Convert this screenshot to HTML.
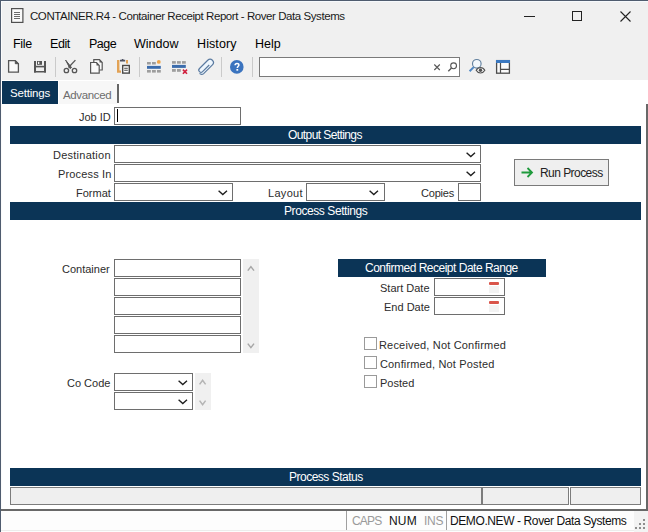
<!DOCTYPE html>
<html><head><meta charset="utf-8">
<style>
*{margin:0;padding:0;box-sizing:border-box}
html,body{width:648px;height:532px;overflow:hidden;background:#f0f0f0;font-family:"Liberation Sans",sans-serif;color:#000}
.a{position:absolute}
svg.a{overflow:visible}
.t{position:absolute;white-space:nowrap;line-height:1}
.menu{font-size:12.5px;color:#000;top:37.5px}
.hdr{position:absolute;left:10px;width:631px;height:18px;background:#0b3456}
.ht{position:absolute;white-space:nowrap;line-height:1;font-size:12px;color:#fff}
.inp{position:absolute;background:#fff;border:1px solid #6e6e6e}
.lbl{position:absolute;font-size:11px;color:#2c2c2c;white-space:nowrap;line-height:1}
.sb{position:absolute;background:#f0f0f0}
.cb{position:absolute;width:13px;height:13px;border:1px solid #9a9a9a;background:#fff}
.psep{position:absolute;width:1px;background:#c9c9c9}
</style></head><body>
<!-- window borders -->
<div class="a" style="left:0;top:0;width:648px;height:1px;background:#4f5c6f"></div>
<div class="a" style="left:0;top:0;width:1px;height:532px;background:#4f5c6f"></div>
<div class="a" style="left:1px;top:1px;width:647px;height:1px;background:#f6f9fc"></div>
<div class="a" style="left:1px;top:1px;width:1px;height:531px;background:#fbfbfb"></div>
<div class="a" style="left:1px;top:80px;width:647px;height:24px;background:#fff"></div>
<div class="a" style="left:1px;top:511px;width:647px;height:21px;background:#fdfdfd"></div>
<div class="a" style="left:1px;top:530px;width:647px;height:1px;background:#ececec"></div>
<div class="a" style="left:634px;top:511px;width:14px;height:21px;background:#f3f3f3"></div>
<!-- title bar -->
<svg class="a" style="left:11px;top:8px" width="13" height="15" viewBox="0 0 13 15"><rect x="0.6" y="0.6" width="11.3" height="13.8" fill="#fafafa" stroke="#505050" stroke-width="1.2"/><g fill="#6a6a6a"><rect x="3" y="4" width="6" height="1"/><rect x="3" y="6" width="6" height="1"/><rect x="3" y="8" width="6" height="1"/><rect x="3" y="10" width="6" height="1"/></g></svg>
<div class="t" id="title" style="left:30px;top:11px;font-size:11.5px;color:#1a1a1a;letter-spacing:-0.43px">CONTAINER.R4 - Container Receipt Report - Rover Data Systems</div>
<div class="a" style="left:524px;top:16px;width:11px;height:1px;background:#222"></div>
<div class="a" style="left:572px;top:11px;width:10px;height:10px;border:1px solid #222"></div>
<svg class="a" style="left:620px;top:11px" width="11" height="11" viewBox="0 0 11 11"><path d="M0.5 0.5L10.5 10.5M10.5 0.5L0.5 10.5" stroke="#222" stroke-width="1.1"/></svg>

<!-- menu -->
<div class="t menu" style="left:13px;letter-spacing:-0.3px">File</div>
<div class="t menu" style="left:50px;letter-spacing:-0.45px">Edit</div>
<div class="t menu" style="left:89px;letter-spacing:-0.5px">Page</div>
<div class="t menu" style="left:134px">Window</div>
<div class="t menu" style="left:197px;letter-spacing:0.1px">History</div>
<div class="t menu" style="left:255px">Help</div>

<!-- toolbar -->
<svg class="a" style="left:0;top:54px" width="520" height="26" viewBox="0 54 520 26">
<!-- new -->
<path d="M8.6 60.6H15.3L18.4 63.7V72.1H8.6Z" fill="#fafafa" stroke="#555" stroke-width="1.3"/>
<path d="M15.3 60.6V63.7H18.4Z" fill="#555" stroke="#555" stroke-width="1"/>
<!-- save -->
<g fill="#555"><rect x="34" y="61" width="2" height="11.5"/><rect x="44" y="61" width="2" height="11.5"/><rect x="34" y="65.8" width="12" height="1.6"/><rect x="34" y="71" width="12" height="1.5"/><rect x="37" y="61" width="5" height="3.8"/></g>
<rect x="38" y="61.8" width="1.3" height="2.2" fill="#f4f4f4"/>
<!-- scissors -->
<path d="M65.6 60.1L71.5 67.5L70 68.5Z" fill="#555" stroke="#555" stroke-width="1"/>
<path d="M75.4 60.1L68.5 67.5" stroke="#555" stroke-width="1.3"/>
<circle cx="66.4" cy="70.5" r="2.2" fill="none" stroke="#555" stroke-width="1.3"/>
<circle cx="74.5" cy="70.5" r="2.2" fill="none" stroke="#555" stroke-width="1.3"/>
<!-- copy -->
<path d="M93.8 59.7H99.5L102.2 62.6V70H93.8Z" fill="#fafafa" stroke="#555" stroke-width="1.2"/>
<path d="M99.5 59.7V62.6H102.2Z" fill="#555"/>
<path d="M90.6 62.5H96.5L99.2 65.4V73.2H90.6Z" fill="#fafafa" stroke="#555" stroke-width="1.2"/>
<path d="M96.5 62.5V65.4H99.2Z" fill="#555"/>
<!-- paste -->
<path d="M118.2 60V71.6H121" fill="none" stroke="#e2a255" stroke-width="2.4"/>
<path d="M127 60V63.5" fill="none" stroke="#e2a255" stroke-width="2"/>
<path d="M120 61.5H125.2V59.8H123.4V59H121.8V59.8H120Z" fill="#4f5363"/>
<rect x="122.7" y="65.5" width="6.6" height="7.6" fill="#fff" stroke="#4a4a4a" stroke-width="1.4"/>
<path d="M124.2 68.3H127.8M124.2 70.3H127.8" stroke="#4a4a4a" stroke-width="1.1"/>
<!-- insert row -->
<g fill="#9d9d9d"><rect x="147" y="62" width="3.8" height="2.5"/><rect x="152" y="62" width="3.8" height="2.5"/><rect x="147" y="70" width="3.8" height="2.6"/><rect x="152" y="70" width="3.8" height="2.6"/><rect x="157" y="70" width="3.8" height="2.6"/></g>
<circle cx="158.8" cy="61.9" r="1.9" fill="#efa54a"/>
<rect x="147" y="65.9" width="13.8" height="2.9" fill="#3b6cac"/>
<!-- delete row -->
<g fill="#9d9d9d"><rect x="172" y="61.1" width="3.8" height="2.6"/><rect x="177" y="61.1" width="3.8" height="2.6"/><rect x="182" y="61.1" width="3.8" height="2.6"/><rect x="172" y="69" width="3.8" height="2.8"/><rect x="177" y="69" width="3.8" height="2.8"/></g>
<rect x="172" y="64.9" width="13.8" height="3" fill="#3b6cac"/>
<path d="M182.9 69.6L187 73.8M187 69.6L182.9 73.8" stroke="#d0203e" stroke-width="1.6"/>
<!-- paperclip -->
<g transform="translate(0.2 0.8) rotate(-45 206.2 66.7)"><path d="M210 66.9H200.6A2.2 2.2 0 0 1 200.6 62.5H212.3A3.3 3.3 0 0 1 212.3 69.1H199.9A2.9 2.9 0 0 1 197.2 66" fill="#eef6fd" stroke="#5a7aa0" stroke-width="1.2"/></g>
<!-- help -->
<circle cx="236.8" cy="66.9" r="6.8" fill="#3b74bf"/>
<path d="M235.1 65.3C235.1 64.1 235.9 63.4 237 63.4C238.1 63.4 238.9 64.1 238.9 65C238.9 66.3 237.3 66.4 237.3 68.1" fill="none" stroke="#fff" stroke-width="1.5"/>
<rect x="236.4" y="69" width="1.8" height="1.7" fill="#fff"/>
<!-- separators -->
<g fill="#cacaca"><rect x="55" y="57" width="1" height="20"/><rect x="139" y="57" width="1" height="20"/><rect x="221" y="57" width="1" height="20"/><rect x="252" y="57" width="1" height="20"/></g>
<!-- search box -->
<rect x="259.5" y="57.5" width="200" height="19" fill="#fff" stroke="#7a7a7a"/>
<path d="M434.3 64.5L439.8 70M439.8 64.5L434.3 70" stroke="#555" stroke-width="1.1"/>
<circle cx="453.6" cy="65.8" r="2.9" fill="none" stroke="#555" stroke-width="1.1"/>
<path d="M451.5 68L448.3 71.2" stroke="#555" stroke-width="1.3"/>
<!-- find eye -->
<circle cx="476.8" cy="63.8" r="4.3" fill="#f2f8fd" stroke="#62809e" stroke-width="1.15"/>
<path d="M473.7 67.1L469.6 71.2" stroke="#4f88c6" stroke-width="2"/>
<path d="M476.2 70.3C478.2 66.7 482.8 66.7 484.8 70.3C482.8 73.9 478.2 73.9 476.2 70.3Z" fill="#fff" stroke="#505050" stroke-width="1.2"/>
<circle cx="480.5" cy="70.3" r="1.7" fill="#505050"/>
<!-- layout -->
<rect x="496.6" y="60.6" width="12.8" height="12.6" fill="#fafafa" stroke="#4c4c4c" stroke-width="1.3"/>
<rect x="496" y="60" width="14" height="3" fill="#3b78c0"/>
<path d="M500.5 63V73M501 69.4H509.4" stroke="#4c4c4c" stroke-width="1.2"/>
</svg>

<!-- tabs -->
<div class="a" style="left:2px;top:81px;width:56px;height:24px;background:#0b3456"></div>
<div class="a" style="left:59px;top:81px;width:58px;height:23px;background:#f7f7f7"></div>
<div class="t" id="tset" style="left:10px;top:88px;font-size:11.5px;color:#fff;letter-spacing:-0.2px">Settings</div>
<div class="t" id="tadv" style="left:63px;top:90px;font-size:11.5px;color:#6d6d6d;letter-spacing:-0.35px">Advanced</div>
<div class="a" style="left:117px;top:84px;width:2px;height:19px;background:#666"></div>

<!-- form area -->
<div class="a" style="left:2px;top:104px;width:644px;height:405px;background:#fff"></div>
<div class="a" style="left:646px;top:104px;width:2px;height:407px;background:#686868"></div>
<div class="a" style="left:1px;top:509px;width:647px;height:2px;background:#686868"></div>

<div class="lbl" id="ljob" style="left:79px;top:112px">Job ID</div>
<div class="inp" style="left:114px;top:107px;width:127px;height:18px"></div>
<div class="a" style="left:117px;top:109px;width:1px;height:13px;background:#000"></div>

<div class="hdr" style="top:126px"></div>
<div class="ht" id="hout" style="left:288px;top:129px;font-size:12px;letter-spacing:-0.59px">Output Settings</div>

<div class="lbl" id="ldest" style="left:53px;top:150px;letter-spacing:0.25px">Destination</div>
<div class="inp" style="left:114px;top:145px;width:367px;height:18px"></div>
<div class="lbl" id="lproc" style="left:58px;top:169px;letter-spacing:0.15px">Process In</div>
<div class="inp" style="left:114px;top:164px;width:367px;height:18px"></div>
<div class="lbl" id="lfmt" style="left:76px;top:188px">Format</div>
<div class="inp" style="left:114px;top:183px;width:119px;height:18px"></div>
<div class="lbl" id="llay" style="left:268px;top:188px;letter-spacing:0.3px">Layout</div>
<div class="inp" style="left:306px;top:183px;width:79px;height:18px"></div>
<div class="lbl" id="lcop" style="left:421px;top:188px;letter-spacing:-0.2px">Copies</div>
<div class="inp" style="left:458px;top:183px;width:23px;height:18px"></div>

<svg class="a" style="left:466px;top:152px" width="10" height="6" viewBox="0 0 10 6"><path d="M0.6 0.8L4.8 4.6L9 0.8" fill="none" stroke="#1e1e1e" stroke-width="1.35"/></svg>
<svg class="a" style="left:466px;top:171px" width="10" height="6" viewBox="0 0 10 6"><path d="M0.6 0.8L4.8 4.6L9 0.8" fill="none" stroke="#1e1e1e" stroke-width="1.35"/></svg>
<svg class="a" style="left:218px;top:190px" width="10" height="6" viewBox="0 0 10 6"><path d="M0.6 0.8L4.8 4.6L9 0.8" fill="none" stroke="#1e1e1e" stroke-width="1.35"/></svg>
<svg class="a" style="left:369px;top:190px" width="10" height="6" viewBox="0 0 10 6"><path d="M0.6 0.8L4.8 4.6L9 0.8" fill="none" stroke="#1e1e1e" stroke-width="1.35"/></svg>

<div class="a" style="left:514px;top:159px;width:95px;height:27px;background:#efefef;border:1px solid #7a7a7a"></div>
<svg class="a" style="left:521px;top:167px" width="13" height="11" viewBox="0 0 13 11"><path d="M0.5 5.5H11M6.5 1L11 5.5L6.5 10" fill="none" stroke="#1f9a3c" stroke-width="1.8"/></svg>
<div class="t" id="brun" style="left:540px;top:167px;font-size:12px;color:#222;letter-spacing:-0.55px">Run Process</div>

<div class="hdr" style="top:202px"></div>
<div class="ht" id="hps" style="left:284px;top:205px;font-size:12px;letter-spacing:-0.42px">Process Settings</div>

<div class="lbl" id="lcont" style="left:62px;top:264px">Container</div>
<div class="inp" style="left:114px;top:259px;width:127px;height:18px"></div>
<div class="inp" style="left:114px;top:278px;width:127px;height:18px"></div>
<div class="inp" style="left:114px;top:297px;width:127px;height:18px"></div>
<div class="inp" style="left:114px;top:316px;width:127px;height:18px"></div>
<div class="inp" style="left:114px;top:335px;width:127px;height:18px"></div>
<div class="sb" style="left:243px;top:259px;width:16px;height:94px"></div>
<svg class="a" style="left:247px;top:265px" width="8" height="6" viewBox="0 0 8 6"><path d="M0.8 5.6L3.9 1.6L7 5.6" fill="none" stroke="#a6a6a6" stroke-width="1.5"/></svg>
<svg class="a" style="left:247px;top:343px" width="8" height="6" viewBox="0 0 8 6"><path d="M0.8 0.6L3.9 4.6L7 0.6" fill="none" stroke="#a6a6a6" stroke-width="1.5"/></svg>

<div class="lbl" id="lco" style="left:67px;top:378px">Co Code</div>
<div class="inp" style="left:114px;top:373px;width:79px;height:18px"></div>
<div class="inp" style="left:114px;top:392px;width:79px;height:18px"></div>
<svg class="a" style="left:178px;top:380px" width="10" height="6" viewBox="0 0 10 6"><path d="M0.6 0.8L4.8 4.6L9 0.8" fill="none" stroke="#1e1e1e" stroke-width="1.35"/></svg>
<svg class="a" style="left:178px;top:399px" width="10" height="6" viewBox="0 0 10 6"><path d="M0.6 0.8L4.8 4.6L9 0.8" fill="none" stroke="#1e1e1e" stroke-width="1.35"/></svg>
<div class="sb" style="left:195px;top:373px;width:16px;height:37px"></div>
<svg class="a" style="left:199px;top:379px" width="8" height="6" viewBox="0 0 8 6"><path d="M0.6 5.4L3.6 1.2L6.6 5.4" fill="none" stroke="#b4b4b4" stroke-width="1.5"/></svg>
<svg class="a" style="left:199px;top:400px" width="8" height="6" viewBox="0 0 8 6"><path d="M0.6 0.6L3.6 4.8L6.6 0.6" fill="none" stroke="#b4b4b4" stroke-width="1.5"/></svg>

<div class="a" style="left:338px;top:259px;width:208px;height:18px;background:#0b3456"></div>
<div class="ht" id="hcr" style="left:365px;top:262px;font-size:12px;letter-spacing:-0.5px">Confirmed Receipt Date Range</div>
<div class="lbl" id="lsd" style="left:380px;top:283px">Start Date</div>
<div class="inp" style="left:434px;top:278px;width:71px;height:18px"></div>
<div class="lbl" id="led" style="left:384px;top:302px">End Date</div>
<div class="inp" style="left:434px;top:297px;width:71px;height:18px"></div>
<div class="a" style="left:489px;top:282px;width:10px;height:3px;background:#d9554a;border-radius:1px"></div>
<div class="a" style="left:489px;top:286px;width:10px;height:7px;background:#f3f3f3"></div>
<div class="a" style="left:489px;top:301px;width:10px;height:3px;background:#d9554a;border-radius:1px"></div>
<div class="a" style="left:489px;top:305px;width:10px;height:7px;background:#f3f3f3"></div>

<div class="cb" style="left:364px;top:337px"></div>
<div class="lbl" id="c1" style="left:379px;top:340px;letter-spacing:0.18px">Received, Not Confirmed</div>
<div class="cb" style="left:364px;top:356px"></div>
<div class="lbl" id="c2" style="left:380px;top:359px;letter-spacing:0.15px">Confirmed, Not Posted</div>
<div class="cb" style="left:364px;top:375px"></div>
<div class="lbl" id="c3" style="left:380px;top:378px">Posted</div>

<div class="hdr" style="top:468px"></div>
<div class="ht" id="hst" style="left:289px;top:471px;font-size:12px;letter-spacing:-0.5px">Process Status</div>
<div class="a" style="left:10px;top:487px;width:472px;height:18px;background:#efefef;border:1px solid #7c7c7c"></div>
<div class="a" style="left:482px;top:487px;width:87px;height:18px;background:#efefef;border:1px solid #7c7c7c"></div>
<div class="a" style="left:570px;top:487px;width:71px;height:18px;background:#efefef;border:1px solid #7c7c7c"></div>

<!-- status bar -->
<div class="a" style="left:346px;top:511px;width:1px;height:19px;background:#a0a0a0"></div>
<div class="a" style="left:446px;top:511px;width:1px;height:19px;background:#a0a0a0"></div>
<div class="t" id="scaps" style="left:352px;top:515px;font-size:12px;color:#9a9a9a;letter-spacing:-0.8px">CAPS</div>
<div class="t" id="snum" style="left:389px;top:515px;font-size:12px;color:#111;letter-spacing:0.2px">NUM</div>
<div class="t" id="sins" style="left:424px;top:515px;font-size:12px;color:#9a9a9a;letter-spacing:-0.3px">INS</div>
<div class="t" id="sdemo" style="left:450px;top:515px;font-size:12px;color:#111;letter-spacing:-0.4px">DEMO.NEW - Rover Data Systems</div>
<svg class="a" style="left:635px;top:519px" width="10" height="10" viewBox="0 0 10 10"><g fill="#8e8e8e"><rect x="8" y="0" width="2" height="2"/><rect x="4" y="4" width="2" height="2"/><rect x="8" y="4" width="2" height="2"/><rect x="0" y="8" width="2" height="2"/><rect x="4" y="8" width="2" height="2"/><rect x="8" y="8" width="2" height="2"/></g></svg>
</body></html>
